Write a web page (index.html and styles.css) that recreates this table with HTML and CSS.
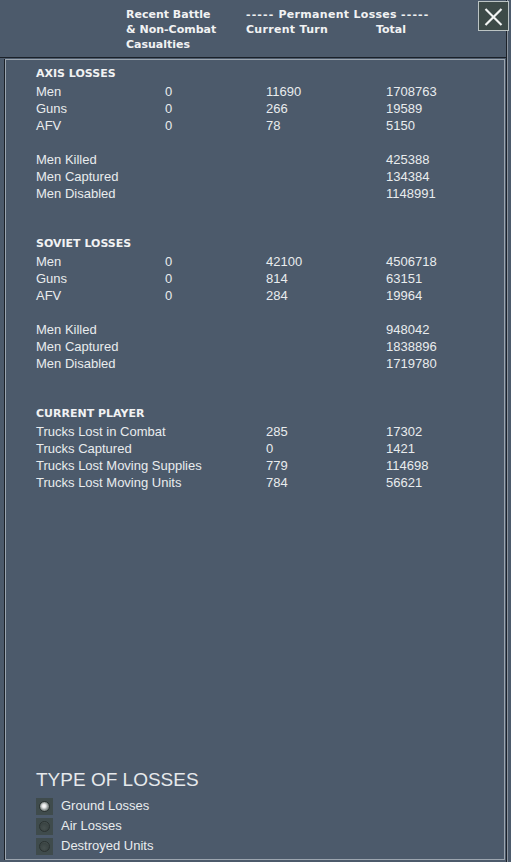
FILE: index.html
```
<!DOCTYPE html>
<html>
<head>
<meta charset="utf-8">
<link rel="stylesheet" href="styles.css">
</head>
<body>
<div class="window">
  <header class="top">
    <div class="hcol hcol-recent">Recent Battle<br>&amp; Non-Combat<br>Casualties</div>
    <div class="hcol hcol-perm"><span class="dash">-----</span> Permanent Losses <span class="dash">-----</span></div>
    <div class="hcol hcol-turn">Current Turn</div>
    <div class="hcol hcol-total">Total</div>
  </header>
  <div class="panel">
    <div class="panel-inner">
      <section class="section">
        <div class="sec-title">AXIS LOSSES</div>
        <div class="row"><span>Men</span><span>0</span><span>11690</span><span>1708763</span></div>
        <div class="row"><span>Guns</span><span>0</span><span>266</span><span>19589</span></div>
        <div class="row"><span>AFV</span><span>0</span><span>78</span><span>5150</span></div>
        <div class="row gap"></div>
        <div class="row"><span>Men Killed</span><span></span><span></span><span>425388</span></div>
        <div class="row"><span>Men Captured</span><span></span><span></span><span>134384</span></div>
        <div class="row"><span>Men Disabled</span><span></span><span></span><span>1148991</span></div>
      </section>
      <section class="section">
        <div class="sec-title">SOVIET LOSSES</div>
        <div class="row"><span>Men</span><span>0</span><span>42100</span><span>4506718</span></div>
        <div class="row"><span>Guns</span><span>0</span><span>814</span><span>63151</span></div>
        <div class="row"><span>AFV</span><span>0</span><span>284</span><span>19964</span></div>
        <div class="row gap"></div>
        <div class="row"><span>Men Killed</span><span></span><span></span><span>948042</span></div>
        <div class="row"><span>Men Captured</span><span></span><span></span><span>1838896</span></div>
        <div class="row"><span>Men Disabled</span><span></span><span></span><span>1719780</span></div>
      </section>
      <section class="section">
        <div class="sec-title">CURRENT PLAYER</div>
        <div class="row"><span>Trucks Lost in Combat</span><span></span><span>285</span><span>17302</span></div>
        <div class="row"><span>Trucks Captured</span><span></span><span>0</span><span>1421</span></div>
        <div class="row"><span>Trucks Lost Moving Supplies</span><span></span><span>779</span><span>114698</span></div>
        <div class="row"><span>Trucks Lost Moving Units</span><span></span><span>784</span><span>56621</span></div>
      </section>
      <div class="types">
        <div class="types-title">TYPE OF LOSSES</div>
        <div class="opt"><span class="radio"><span class="dot on"></span></span><span>Ground Losses</span></div>
        <div class="opt"><span class="radio"><span class="dot"></span></span><span>Air Losses</span></div>
        <div class="opt"><span class="radio"><span class="dot"></span></span><span>Destroyed Units</span></div>
      </div>
    </div>
  </div>
  <button class="close" aria-label="Close">
    <svg width="30" height="29" viewBox="0 0 30 29"><path d="M7.5 7.5 L22.5 22.5 M22.5 7.5 L7.5 22.5" stroke="#f2f4f4" stroke-width="2.2" stroke-linecap="square" fill="none"/></svg>
  </button>
</div>
</body>
</html>
```
FILE: styles.css
```
html, body {
  margin: 0;
  padding: 0;
}
body {
  width: 511px;
  height: 862px;
  overflow: hidden;
  background: #4c5a6b;
  font-family: "Liberation Sans", Arial, sans-serif;
  color: #e9ecee;
}
.window {
  position: relative;
  width: 506px;
  height: 862px;
  border-right: 1px solid #1b2129;
  box-shadow: 1px 0 0 #8a939e;
  display: flex;
  flex-direction: column;
}
.top {
  box-sizing: border-box;
  height: 58px;
  border-bottom: 1px solid #1b2129;
  padding: 7px 0 0 126px;
  display: grid;
  grid-template-columns: 120px 130px 1fr;
  grid-template-rows: 15px 15px 15px;
  font-family: "DejaVu Sans", Verdana, sans-serif;
  font-weight: bold;
  font-size: 11px;
  line-height: 15px;
  color: #f1f2f3;
}
.hcol-recent { grid-column: 1; grid-row: 1 / 4; }
.hcol-perm { grid-column: 2 / 4; grid-row: 1; white-space: pre; letter-spacing: 0.3px; }
.hcol-turn { grid-column: 2; grid-row: 2; letter-spacing: 0.3px; }
.hcol-total { grid-column: 3; grid-row: 2; }
.dash { letter-spacing: 1.1px; }
.panel {
  margin: 1px 1px 0 4px;
  border-left: 1px solid #1b2129;
}
.panel-inner {
  box-sizing: border-box;
  height: 801px;
  border: 1px solid #9ca5af;
  padding: 5px 0 0 30px;
  display: flex;
  flex-direction: column;
}
.section + .section {
  margin-top: 33px;
}
.sec-title {
  height: 18px;
  font-family: "DejaVu Sans", Verdana, sans-serif;
  font-weight: bold;
  font-size: 11px;
  line-height: 18px;
  color: #f1f2f3;
}
.row {
  display: grid;
  grid-template-columns: 129px 101px 120px 1fr;
  height: 17px;
  font-size: 13px;
  line-height: 17px;
  white-space: nowrap;
}
.types {
  margin-top: auto;
  padding-bottom: 3px;
}
.types-title {
  font-size: 19px;
  line-height: 22px;
  color: #e6e9ec;
  margin-bottom: 5px;
}
.opt {
  display: flex;
  align-items: center;
  gap: 8px;
  height: 20px;
  font-size: 13px;
  line-height: 20px;
}
.radio {
  width: 17px;
  height: 17px;
  background: #3f4b4c;
  display: flex;
  align-items: center;
  justify-content: center;
}
.dot {
  box-sizing: border-box;
  width: 11px;
  height: 11px;
  border-radius: 50%;
  border: 1px solid #2a3231;
  background: radial-gradient(circle at 45% 65%, #46504f 0%, #3a4443 60%, #5c6665 100%);
}
.dot.on {
  background: radial-gradient(circle at 45% 45%, #ffffff 0%, #e8eaea 25%, #8f9796 55%, #4a5352 100%);
}
.close {
  position: absolute;
  top: 1px;
  left: 478px;
  width: 31px;
  height: 30px;
  padding: 0;
  margin: 0;
  box-sizing: border-box;
  border: 1px solid #bcc4c4;
  background: #3d4a48;
  display: flex;
  align-items: center;
  justify-content: center;
}
```
